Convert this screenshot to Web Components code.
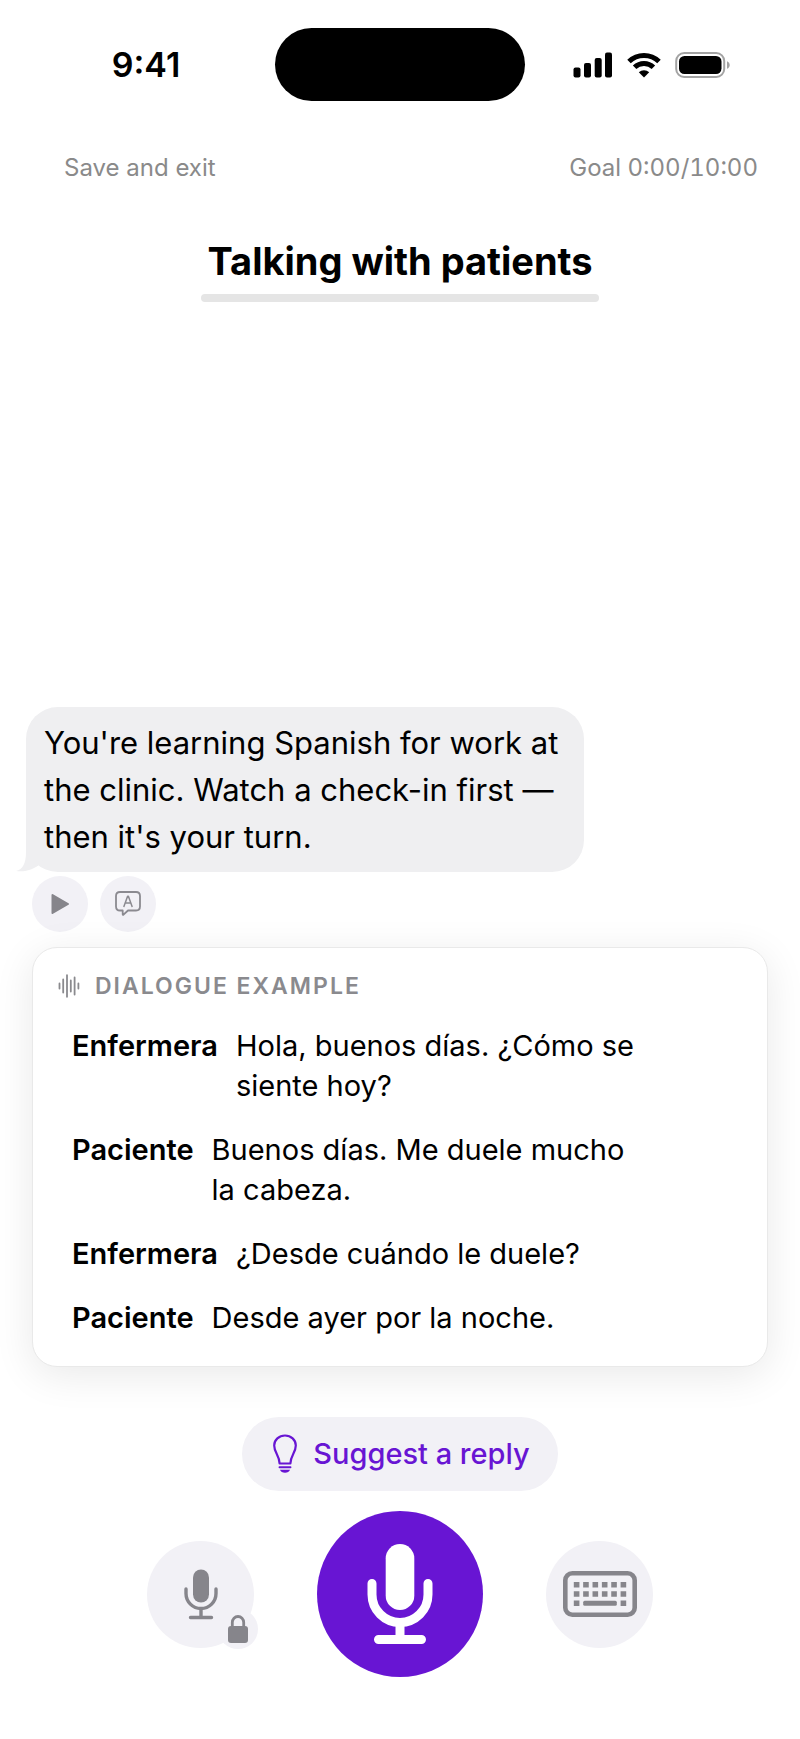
<!DOCTYPE html>
<html lang="en">
<head>
  <meta charset="UTF-8">
  <meta name="viewport" content="width=device-width, initial-scale=1.0">
  <title>Talking with patients</title>
  <style>
    body {
      margin: 0;
      background-color: #ffffff;
      color: #000000;
      font-family: Inter, "Liberation Sans", sans-serif;
    }
  </style>
</head>
<body>
  <lesson-screen>
    <status-bar slot="top" time="9:41"></status-bar>
    <lesson-nav slot="top" goal="Goal 0:00/10:00">Save and exit</lesson-nav>
    <lesson-title slot="top">Talking with patients</lesson-title>

    <chat-bubble>You're learning Spanish for work at the clinic. Watch a check-in first — then it's your turn.</chat-bubble>
    <dialogue-card label="Dialogue example">
      <dialogue-line speaker="Enfermera">Hola, buenos días. ¿Cómo se siente hoy?</dialogue-line>
      <dialogue-line speaker="Paciente">Buenos días. Me duele mucho la cabeza.</dialogue-line>
      <dialogue-line speaker="Enfermera">¿Desde cuándo le duele?</dialogue-line>
      <dialogue-line speaker="Paciente">Desde ayer por la noche.</dialogue-line>
    </dialogue-card>

    <reply-bar slot="bottom">Suggest a reply</reply-bar>
  </lesson-screen>

  <script>
    const base = `
      <style>
        * {
          box-sizing: border-box;
          padding: 0;
          margin: 0;
        }
        :host {
          display: block;
        }
        button {
          border: none;
          background: none;
          font: inherit;
          color: inherit;
          cursor: pointer;
        }
        svg {
          display: block;
          flex: none;
        }
      </style>
    `;

    function define(name, markup, setup) {
      const template = document.createElement("template");
      template.innerHTML = base + markup;

      window.customElements.define(name, class extends HTMLElement {
        constructor() {
          super();
          this.attachShadow({ mode: "open" });
          this.shadowRoot.appendChild(template.content.cloneNode(true));
        }

        connectedCallback() {
          if (setup) setup(this, this.shadowRoot);
        }
      });
    }

    define("lesson-screen", `
      <style>
        :host {
          display: flex;
          flex-direction: column;
          min-height: 100vh;
        }
        main {
          flex: 1;
          display: flex;
          flex-direction: column;
          justify-content: flex-end;
          padding: 32px 32px 50px;
        }
      </style>
      <header><slot name="top"></slot></header>
      <main><slot></slot></main>
      <footer><slot name="bottom"></slot></footer>
    `);

    define("status-bar", `
      <style>
        :host {
          display: grid;
          grid-template-columns: 1fr 250px 1fr;
          align-items: center;
          padding-top: 28px;
        }
        time {
          padding-right: 17px;
          padding-left: 34px;
          text-align: center;
          font-size: 34px;
          line-height: 40px;
          font-weight: 600;
        }
        .island {
          height: 73px;
          border-radius: 37px;
          background-color: #000000;
        }
        .icons {
          display: flex;
          align-items: center;
          gap: 14px;
          padding-left: 48px;
        }
      </style>
      <time></time>
      <div class="island"></div>
      <div class="icons">
        <svg width="40" height="26" viewBox="0 0 40 26">
          <rect x="0.5" y="15.5" width="7" height="10" rx="2"/>
          <rect x="11" y="11" width="7" height="14.5" rx="2"/>
          <rect x="21.7" y="6" width="7" height="19.5" rx="2"/>
          <rect x="32" y="0.5" width="7" height="25" rx="2"/>
        </svg>
        <svg width="34" height="26" viewBox="0 0 34 26">
          <g fill="none" stroke="#000000" stroke-width="5">
            <path d="M2 9.5A21.5 21.5 0 0 1 32 9.5"/>
            <path d="M7.6 15.2A13.5 13.5 0 0 1 26.4 15.2"/>
          </g>
          <path d="M17 25.5L11.8 20.3A7.4 7.4 0 0 1 22.2 20.3Z"/>
        </svg>
        <svg width="56" height="26" viewBox="0 0 56 26">
          <rect x="1.2" y="1" width="48" height="24" rx="8" fill="none" stroke="#a3a3a3" stroke-width="2"/>
          <rect x="4" y="4" width="42.5" height="18" rx="5.5"/>
          <path d="M52 9.2C55.6 10.6 55.6 15.4 52 16.8Z" fill="#a3a3a3"/>
        </svg>
      </div>
    `, (host, root) => {
      root.querySelector("time").textContent = host.getAttribute("time");
    });

    define("lesson-nav", `
      <style>
        :host {
          display: flex;
          justify-content: space-between;
          align-items: center;
          padding: 51px 42px 0 64px;
          color: #8a8a8a;
          font-size: 24px;
          line-height: 32px;
        }
        span {
          font-variant-numeric: tabular-nums;
        }
      </style>
      <button><slot></slot></button>
      <span></span>
    `, (host, root) => {
      root.querySelector("span").textContent = host.getAttribute("goal");
    });

    define("lesson-title", `
      <style>
        :host {
          display: flex;
          justify-content: center;
          padding-top: 53px;
        }
        div {
          display: flex;
          flex-direction: column;
          gap: 9px;
        }
        h1 {
          padding: 0 6px;
          font-size: 38px;
          line-height: 48px;
          font-weight: 700;
        }
        .track {
          height: 8px;
          border-radius: 4px;
          background-color: #e5e5e5;
        }
      </style>
      <div>
        <h1><slot></slot></h1>
        <div class="track" role="progressbar" aria-label="Lesson progress" aria-valuenow="0"></div>
      </div>
    `);

    define("chat-bubble", `
      <style>
        :host {
          margin-left: -6px;
        }
        .bubble {
          position: relative;
          width: fit-content;
          max-width: 558px;
          padding: 12px 18px;
          border-radius: 32px;
          background-color: #efeff1;
          font-size: 31px;
          line-height: 47px;
        }
        .tail {
          position: absolute;
          left: -10px;
          bottom: 0;
        }
        /* keeps the text above the tail */
        p {
          position: relative;
        }
        .actions {
          display: flex;
          gap: 12px;
          padding: 4px 6px 15px;
        }
        button {
          display: flex;
          align-items: center;
          justify-content: center;
          width: 56px;
          height: 56px;
          border-radius: 28px;
          background-color: #f2f1f6;
        }
      </style>
      <div class="bubble">
        <svg class="tail" width="34" height="34" viewBox="0 0 34 34">
          <path d="M10 0V14C10 25 7 31.500 0 33C10 34.500 18 31 25 25.500L32 10Z" fill="#efeff1"/>
        </svg>
        <p><slot></slot></p>
      </div>
      <div class="actions">
        <button aria-label="Play">
          <svg width="20" height="22" viewBox="0 0 20 22">
            <path d="M2.500 2L18 11L2.500 20Z" fill="#86858b" stroke="#86858b" stroke-width="2" stroke-linejoin="round"/>
          </svg>
        </button>
        <button aria-label="Translate">
          <svg width="26" height="26" viewBox="0 0 26 26">
            <path d="M5 1H21Q25 1 25 5V15.500Q25 19.500 21 19.500H13L8.500 23.700Q7.700 24.300 7.700 23V19.500H5Q1 19.500 1 15.500V5Q1 1 5 1Z" fill="none" stroke="#8b8a90" stroke-width="1.800" stroke-linejoin="round"/>
            <path d="M8.900 15.400L12.600 5.300H13.400L17.100 15.400M10.200 12H15.800" fill="none" stroke="#8b8a90" stroke-width="1.500" stroke-linecap="round" stroke-linejoin="round"/>
          </svg>
        </button>
      </div>
    `);

    define("dialogue-card", `
      <style>
        section {
          padding: 22px 25px 28px;
          border: 1px solid #e9e9e9;
          border-radius: 25px;
          background-color: #ffffff;
          box-shadow: 0 8px 40px rgba(0, 0, 0, 0.09);
        }
        h2 {
          display: flex;
          align-items: center;
          gap: 15px;
          color: #8a8a8e;
          font-size: 23px;
          line-height: 32px;
          font-weight: 600;
          letter-spacing: 2px;
          text-transform: uppercase;
        }
        .lines {
          display: flex;
          flex-direction: column;
          gap: 24px;
          max-width: 584px;
          padding: 24px 0 0 14px;
        }
      </style>
      <section>
        <h2>
          <svg width="22" height="24" viewBox="0 0 22 24">
            <path d="M1.500 9.500V14.500M5.200 5.500V18.500M9 1.200V22.800M12.800 6.500V17.500M16.600 3.500V20.500M20.400 9.500V14.500" stroke="#8a8a8e" stroke-width="1.800" stroke-linecap="round"/>
          </svg>
          <span></span>
        </h2>
        <div class="lines"><slot></slot></div>
      </section>
    `, (host, root) => {
      root.querySelector("span").textContent = host.getAttribute("label");
    });

    define("dialogue-line", `
      <style>
        :host {
          display: flex;
          gap: 18px;
          font-size: 29px;
          line-height: 40px;
        }
        b {
          font-weight: 600;
        }
      </style>
      <b></b>
      <p><slot></slot></p>
    `, (host, root) => {
      root.querySelector("b").textContent = host.getAttribute("speaker");
    });

    define("reply-bar", `
      <style>
        :host {
          display: flex;
          flex-direction: column;
          align-items: center;
          gap: 20px;
          padding-bottom: 62px;
        }
        button {
          display: flex;
          align-items: center;
          justify-content: center;
          background-color: #f2f1f6;
        }
        .suggest {
          gap: 16px;
          height: 74px;
          padding: 0 28px 0 31px;
          border-radius: 37px;
          color: #6815d3;
          font-size: 29px;
          line-height: 40px;
          font-weight: 500;
        }
        .controls {
          display: flex;
          align-items: center;
          gap: 63px;
        }
        .small {
          position: relative;
          width: 107px;
          height: 107px;
          border-radius: 54px;
        }
        .record {
          width: 166px;
          height: 166px;
          border-radius: 83px;
          background-color: #6815d3;
        }
        .lock {
          position: absolute;
          right: -4px;
          bottom: -1px;
          display: flex;
          align-items: center;
          justify-content: center;
          width: 40px;
          height: 40px;
          border-radius: 20px;
          background-color: #f2f1f6;
        }
      </style>
      <button class="suggest">
        <svg width="24" height="40" viewBox="0 0 24 40">
          <path d="M6.600 29.500C6.300 21 1.200 18.500 1.200 11.500A10.800 10 0 0 1 22.800 11.500C22.800 18.500 17.700 21 17.400 29.500Z" fill="none" stroke="#6815d3" stroke-width="2.200" stroke-linejoin="round"/>
          <path d="M6.500 33.300H17.500" stroke="#6815d3" stroke-width="1.900" stroke-linecap="round"/>
          <path d="M7 35.700H17C16 39.600 8 39.600 7 35.700Z" fill="#6815d3"/>
        </svg>
        <span><slot></slot></span>
      </button>
      <div class="controls">
        <button class="small" aria-label="Hands-free microphone">
          <svg width="36" height="52" viewBox="0 0 36 52">
            <rect x="10" y="1.500" width="16" height="33" rx="8" fill="#86858b"/>
            <path d="M3 21V25.500A15 15 0 0 0 33 25.500V21M18 41V49M7.500 49.500H28.500" fill="none" stroke="#86858b" stroke-width="3.400" stroke-linecap="round"/>
          </svg>
          <span class="lock">
            <svg width="20" height="28" viewBox="0 0 20 28">
              <rect x="0" y="11" width="20" height="17" rx="3" fill="#86858b"/>
              <path d="M4.300 12V7.500A5.700 6 0 0 1 15.700 7.500V12" fill="none" stroke="#86858b" stroke-width="2.800"/>
            </svg>
          </span>
        </button>
        <button class="record" aria-label="Record">
          <svg width="66" height="100" viewBox="0 0 66 100">
            <rect x="18.700" y="0" width="28.600" height="66" rx="14.300" fill="#ffffff"/>
            <path d="M5 39.500V50.500A28 28 0 0 0 61 50.500V39.500M11.500 95.500H54.500" fill="none" stroke="#ffffff" stroke-width="9" stroke-linecap="round"/>
            <path d="M33 78V95" stroke="#ffffff" stroke-width="9"/>
          </svg>
        </button>
        <button class="small" aria-label="Keyboard">
          <svg width="74" height="46" viewBox="0 0 74 46">
            <rect x="2.300" y="2.300" width="69.400" height="41.400" rx="7" fill="none" stroke="#86858b" stroke-width="4.600"/>
            <path d="M10.800 13.700H63.200M10.800 23H63.200" stroke="#86858b" stroke-width="5.600" stroke-dasharray="5.600 3.760"/>
            <path d="M10.800 32.300H16.400M57.600 32.300H63.200" stroke="#86858b" stroke-width="5.600"/>
            <rect x="20.200" y="29.800" width="33.600" height="5" rx="1.500" fill="#86858b"/>
          </svg>
        </button>
      </div>
    `);
  </script>
</body>
</html>
